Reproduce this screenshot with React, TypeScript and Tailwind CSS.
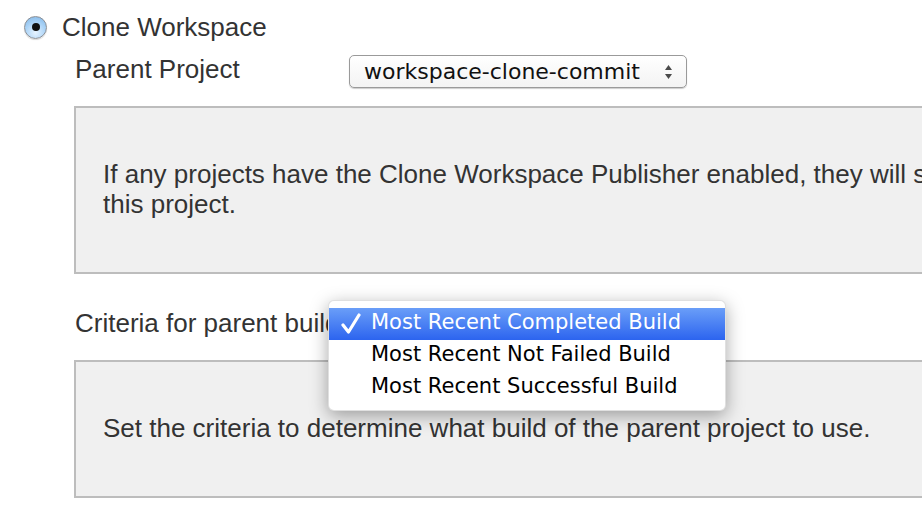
const items = [
  "Most Recent Completed Build",
  "Most Recent Not Failed Build",
  "Most Recent Successful Build",
];

function Radio() {
  return (
    <div className="flex h-[23px] w-[23px] items-center justify-center rounded-full border border-[#8c8f94] bg-[radial-gradient(circle_at_50%_75%,#e6f3ff_0%,#a9d2f6_55%,#7db4e6_100%)] shadow-[0_1px_1px_rgba(0,0,0,0.15)]">
      <div className="h-[8px] w-[8px] rounded-full bg-[#111]" />
    </div>
  );
}

function SelectBox() {
  return (
    <div className="mt-[1px] flex h-[33px] w-[338px] items-center justify-between rounded-[5px] border border-[#9a9a9a] bg-[linear-gradient(#ffffff,#f3f3f3)] pl-[14px] pr-[13px] font-['DejaVu_Sans',sans-serif] text-[22px] text-[#111] shadow-[0_1px_1px_rgba(0,0,0,0.2)]">
      <span className="leading-[31px]">workspace-clone-commit</span>
      <svg width="9" height="16" viewBox="0 0 9 16">
        <path d="M4.5 1 L8 6 L1 6 Z" fill="#4a4a4a" />
        <path d="M4.5 15 L8 10 L1 10 Z" fill="#4a4a4a" />
      </svg>
    </div>
  );
}

function Check() {
  return (
    <svg width="20" height="22" viewBox="0 0 20 22" className="absolute left-[12px] top-[5px]">
      <path d="M2 12 L7.5 19 L18 2" fill="none" stroke="white" strokeWidth="3.2" strokeLinejoin="round" strokeLinecap="round" />
    </svg>
  );
}

export default function App() {
  return (
    <div className="relative h-[522px] w-[922px] overflow-hidden bg-white font-['Liberation_Sans',Arial,sans-serif] text-[26px] leading-[30px] text-[#333]">
      <div className="flex items-center gap-[15px] pl-[24px] pt-[12px]">
        <Radio />
        <span>Clone Workspace</span>
      </div>

      <div className="w-[1200px] pl-[74px]">
        <div className="mt-[12px] flex items-start">
          <span className="w-[275px] pl-[1px]">Parent Project</span>
          <SelectBox />
        </div>

        <div className="mt-[18px] h-[168px] border-2 border-[#bdbdbd] bg-[#f0f0f0] pl-[27px] pt-[51px] whitespace-nowrap">
          If any projects have the Clone Workspace Publisher enabled, they will show up here as possible parents for
          <br />
          this project.
        </div>

        <div className="mt-[34px] pl-[1px]">Criteria for parent build</div>

        <div className="mt-[22px] h-[138px] border-2 border-[#bdbdbd] bg-[#f0f0f0] pl-[27px] pt-[51px] whitespace-nowrap">
          Set the criteria to determine what build of the parent project to use.
        </div>
      </div>

      <div className="absolute left-[328px] top-[300px] h-[111px] w-[398px] rounded-[6px] border border-[rgba(0,0,0,0.12)] bg-white pt-[7px] font-['DejaVu_Sans',sans-serif] text-[21px] text-black shadow-[0_5px_18px_rgba(0,0,0,0.35)]">
        {items.map((item, i) => (
          <div
            key={item}
            className={
              i === 0
                ? "relative h-[32px] bg-[linear-gradient(#6a9ef8,#2c64ef)] pl-[42px] leading-[28px] text-white"
                : "relative h-[32px] pl-[42px] leading-[28px]"
            }
          >
            {i === 0 && <Check />}
            {item}
          </div>
        ))}
      </div>
    </div>
  );
}
